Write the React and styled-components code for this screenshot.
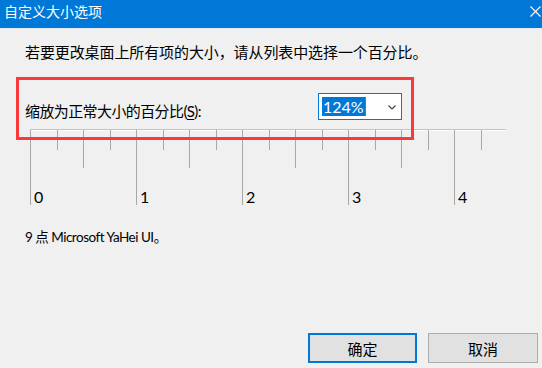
import React from 'react'
import styled, { createGlobalStyle } from 'styled-components'

const FONT = `"Lato", "Noto Sans CJK SC", "Noto Sans", sans-serif`

const GlobalStyle = createGlobalStyle`
  html, body {
    margin: 0;
    padding: 0;
    background: #f0f0f0;
  }
  body {
    font-family: ${FONT};
    color: #000;
  }
`

const TICKS = Array.from({ length: 18 }, (_, i) => i)

const App = () => {
  return (
    <Window>
      <GlobalStyle />
      <TitleBar>
        <Title>自定义大小选项</Title>
        <CloseIcon width="11" height="11" viewBox="0 0 11 11">
          <path d="M0.5 0.5 L10.5 10.5 M10.5 0.5 L0.5 10.5" stroke="#fff" strokeWidth="1.1" />
        </CloseIcon>
      </TitleBar>

      <Content>
        <Highlight />
        <Description>若要更改桌面上所有项的大小，请从列表中选择一个百分比。</Description>

        <ScaleRow>
          <Label>
            缩放为正常大小的百分比(<u>S</u>):
          </Label>
          <Combo>
            <Selected>124%</Selected>
            <Chevron width="8" height="5" viewBox="0 0 8 5">
              <polyline points="0.5,0.5 4,4 7.5,0.5" fill="none" stroke="#4a3a30" strokeWidth="1.1" />
            </Chevron>
          </Combo>
        </ScaleRow>

        <Ruler>
          {TICKS.map((i) => (
            <Tick key={i} kind={i % 4 === 0 ? 'major' : i % 2 === 0 ? 'mid' : 'minor'}>
              {i % 4 === 0 && <TickLabel>{i / 4}</TickLabel>}
            </Tick>
          ))}
        </Ruler>

        <FontInfo>9 点 Microsoft YaHei UI。</FontInfo>

        <Buttons>
          <Button primary>确定</Button>
          <Button>取消</Button>
        </Buttons>
      </Content>
    </Window>
  )
}

const Window = styled.div`
  width: 542px;
  height: 368px;
  display: flex;
  flex-direction: column;
  background: #f0f0f0;
  overflow: hidden;
`

const TitleBar = styled.div`
  height: 29px;
  flex: 0 0 29px;
  background: #0078d7;
  display: flex;
  justify-content: space-between;
  align-items: flex-start;
  padding-left: 4px;
  padding-right: 1px;
  box-sizing: border-box;
  border-bottom: 1px solid #e4ebf2;
`

const Title = styled.div`
  color: #fff;
  font-size: 14px;
  line-height: 24px;
`

const CloseIcon = styled.svg`
  margin-top: 6px;
`

const Content = styled.div`
  position: relative;
  flex: 1;
  display: flex;
  flex-direction: column;
`

const Highlight = styled.div`
  position: absolute;
  left: 16px;
  top: 48px;
  width: 398px;
  height: 63px;
  border: 3px solid #fa3a3a;
  box-sizing: border-box;
  pointer-events: none;
`

const Description = styled.div`
  margin: 13px 0 0 25px;
  font-size: 15px;
  line-height: 20px;
  letter-spacing: -0.1px;
`

const ScaleRow = styled.div`
  display: flex;
  align-items: flex-start;
  margin-top: 31px;
  padding-left: 25px;
`

const Label = styled.div`
  flex: 0 0 293px;
  margin-top: 8px;
  font-size: 15px;
  line-height: 20px;
  letter-spacing: -0.6px;

  u {
    text-underline-offset: 2px;
  }
`

const Combo = styled.div`
  width: 84px;
  height: 27px;
  box-sizing: border-box;
  border: 1px solid #0078d7;
  background: #fff;
  display: flex;
  align-items: center;
  justify-content: space-between;
  padding: 0 5px 0 3px;
`

const Selected = styled.span`
  background: #0078d7;
  color: #fff;
  font-size: 16px;
  line-height: 19px;
  height: 19px;
  padding: 0 1px 0 1px;
  border-right: 1px solid #9a6a3a;
`

const Chevron = styled.svg`
  margin-top: 1px;
`

const Ruler = styled.div`
  margin: 8px 0 0 30px;
  width: 476px;
  height: 76px;
  border-top: 1px solid #c4c4c4;
  box-shadow: inset 0 1px 0 #fdfdfd;
  display: flex;
  align-items: flex-start;
`

const Tick = styled.div`
  flex: 0 0 26.5px;
  height: ${(p) => (p.kind === 'major' ? 75 : p.kind === 'mid' ? 38 : 20)}px;
  border-left: 1px solid #a8a8a8;
  box-sizing: border-box;
  display: flex;
  align-items: flex-end;
`

const TickLabel = styled.span`
  padding-left: 3px;
  font-size: 16px;
  line-height: 17px;
`

const FontInfo = styled.div`
  margin: 21px 0 0 25px;
  font-size: 13.5px;
  line-height: 20px;
  letter-spacing: -0.5px;
`

const Buttons = styled.div`
  margin-top: auto;
  display: flex;
  justify-content: flex-end;
  gap: 11px;
  padding: 0 4px 5px 0;
`

const Button = styled.button`
  width: ${(p) => (p.primary ? 109 : 110)}px;
  height: 30px;
  box-sizing: border-box;
  background: #e1e1e1;
  border: ${(p) => (p.primary ? '2px solid #0078d7' : '1px solid #adadad')};
  font-family: ${FONT};
  font-size: 15px;
  color: #000;
  padding: 0;
  margin: 0;
`

export default App
